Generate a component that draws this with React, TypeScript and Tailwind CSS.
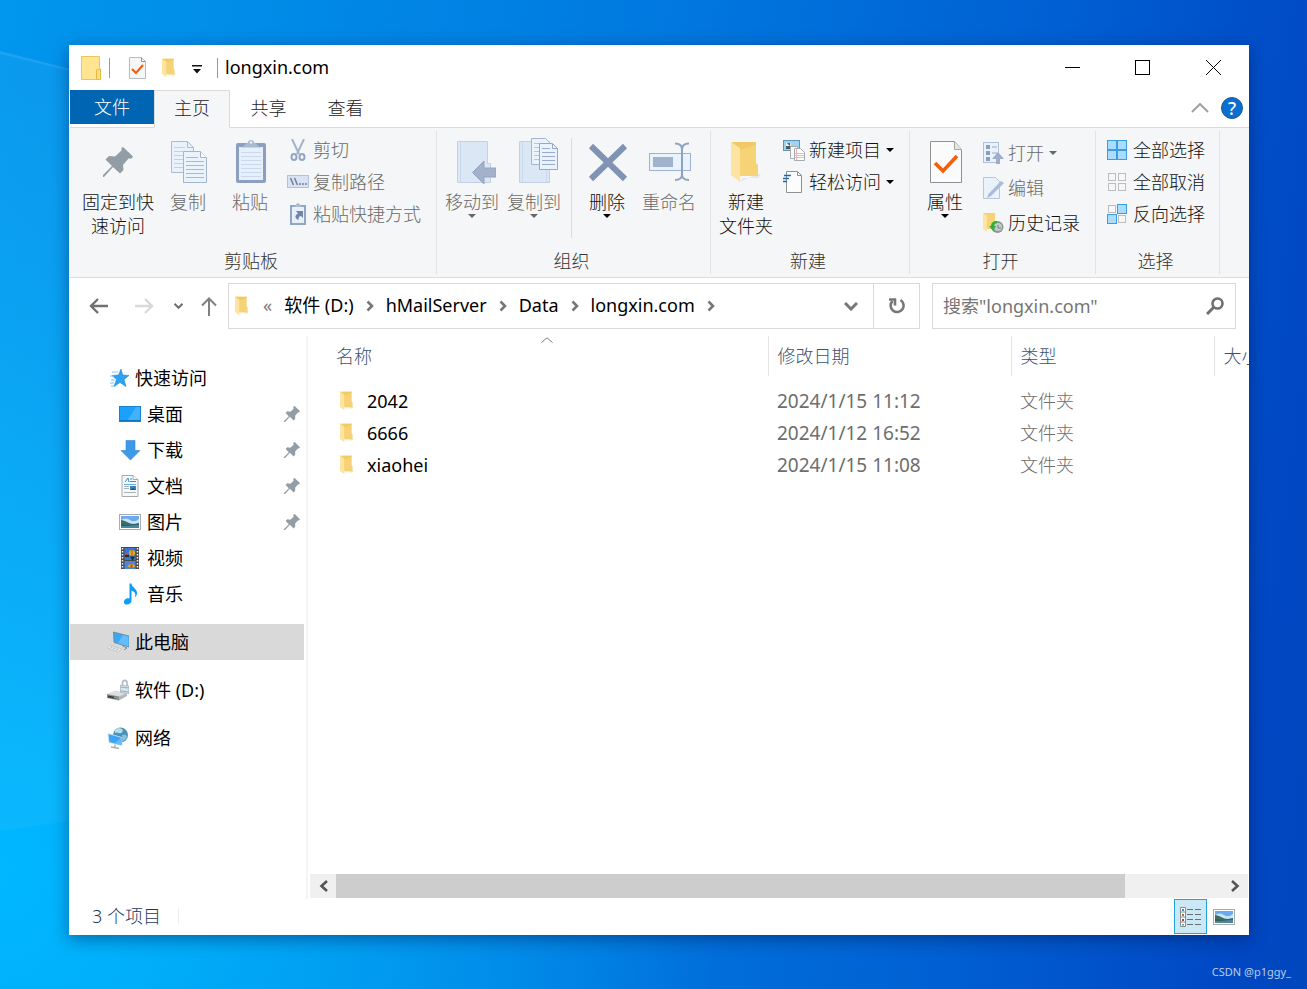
import { useState } from 'react'
import type { ReactNode } from 'react'

type IconName =
  | 'star'
  | 'desktop'
  | 'download'
  | 'document'
  | 'picture'
  | 'video'
  | 'music'
  | 'computer'
  | 'drive'
  | 'network'

type SideItem = {
  label: string
  icon: IconName
  pinned?: boolean
}

type FileItem = {
  name: string
  date: string
  type: string
}

const quickAccess: SideItem[] = [
  { label: '桌面', icon: 'desktop', pinned: true },
  { label: '下载', icon: 'download', pinned: true },
  { label: '文档', icon: 'document', pinned: true },
  { label: '图片', icon: 'picture', pinned: true },
  { label: '视频', icon: 'video' },
  { label: '音乐', icon: 'music' },
]

const roots: SideItem[] = [
  { label: '此电脑', icon: 'computer' },
  { label: '软件 (D:)', icon: 'drive' },
  { label: '网络', icon: 'network' },
]

const files: FileItem[] = [
  { name: '2042', date: '2024/1/15 11:12', type: '文件夹' },
  { name: '6666', date: '2024/1/12 16:52', type: '文件夹' },
  { name: 'xiaohei', date: '2024/1/15 11:08', type: '文件夹' },
]

const crumbs = ['软件 (D:)', 'hMailServer', 'Data', 'longxin.com']

/* ---------- shared icons ---------- */

const OpenFolder = ({ className }: { className: string }) => (
  <svg viewBox="0 0 30 42" className={className} aria-hidden="true">
    <path d="M27 33h3l-3 4H12l-4 4z" fill="#d9dbdd" opacity=".6" />
    <path d="M1 1h24v21l2 2v11H9z" fill="#f6d376" />
    <path d="M1 1h24v3L9 9z" fill="#f1ca66" />
    <path d="M0 1l9 6v34l-9-7z" fill="#ffe3a0" />
  </svg>
)

const SmallPin = () => (
  <svg viewBox="0 0 30 30" className="size-4" fill="#929da5" aria-hidden="true">
    <path d="M20 0l10 10-2 2-2 0-5 6 0 6-3 3-7-7-9 10-2 0 0-2 9-9-6-6 3-3 6 1 6-6-1-3z" />
  </svg>
)

const Caret = ({ muted }: { muted?: boolean }) => (
  <svg viewBox="0 0 8 4" className="h-1 w-2 shrink-0" fill={muted ? '#666' : '#000'} aria-hidden="true">
    <path d="M0 0h8L4 4z" />
  </svg>
)

const Chevron = () => (
  <svg viewBox="0 0 8 12" className="h-3 w-2 shrink-0" fill="none" stroke="#777" strokeWidth="2.6" aria-hidden="true">
    <path d="M1.500 1.500L6 6l-4.500 4.500" />
  </svg>
)

const Landscape = () => (
  <svg viewBox="0 0 22 16" className="h-4 w-[22px]" aria-hidden="true">
    <rect x=".5" y=".5" width="21" height="15" fill="#fff" stroke="#a8acb0" />
    <rect x="2" y="2" width="18" height="12" fill="#6ba9f0" />
    <path d="M2 6q5-3 9 0t9-1v5H2z" fill="#c9e4fa" />
    <path d="M2 6c4 0 8 4 13 4H2z" fill="#3f6f5b" />
    <path d="M2 10h18v4H2z" fill="#4a86a0" />
    <path d="M2 10c6 0 11 1 18-1v1.500L8 12H2z" fill="#2f5f58" />
  </svg>
)

const sideIcons: Record<IconName, ReactNode> = {
  star: (
    <svg viewBox="0 0 22 22" className="size-[22px]" aria-hidden="true">
      <path d="M14 2l1.600 6 6.400.5-5 4 2 7-6-4-6 4 2.500-7L5 8.500l6.500-.5z" fill="#2ea3f2" stroke="#1c86d6" strokeWidth=".6" />
      <path d="M5 5h6M3 9h4M4 13h4M3 16h4M4 19h3" stroke="#7fc6f5" />
    </svg>
  ),
  desktop: (
    <svg viewBox="0 0 22 16" className="h-4 w-[22px]" aria-hidden="true">
      <rect x=".5" y=".5" width="21" height="15" fill="#1ba1fb" stroke="#1784d6" />
      <path d="M8 15L17 1h4v14z" fill="#43b2fd" />
      <path d="M1 14.500h20" stroke="#1273bd" />
    </svg>
  ),
  download: (
    <svg viewBox="0 0 22 22" className="size-[22px]" aria-hidden="true">
      <path d="M7 1.500h9v10h5L11.500 21 2 11.500h5z" fill="#3d9ae8" stroke="#2f86d3" strokeWidth=".6" />
    </svg>
  ),
  document: (
    <svg viewBox="0 0 22 22" className="size-[22px]" aria-hidden="true">
      <path d="M3 .5h11l5 4v17H3z" fill="#f7f8f9" stroke="#a5aab0" />
      <path d="M14 .5v4h5" fill="#fff" stroke="#a5aab0" />
      <path d="M6 7l3-4 1 4M11 4h2M11 6.500h6" stroke="#2695dd" fill="none" />
      <path d="M5 9.500h12" stroke="#61b1e6" />
      <path d="M5 11.500h5M5 13.500h5M5 17.500h12" stroke="#a9b0b7" />
      <rect x="11" y="11" width="6" height="4" fill="#3c83bb" />
      <path d="M11 15l3-2 3 2z" fill="#2c5a48" />
    </svg>
  ),
  picture: <Landscape />,
  video: (
    <svg viewBox="0 0 22 22" className="size-[22px]" aria-hidden="true">
      <rect x="2" width="18" height="22" fill="#4a4a4a" />
      <rect x="5.500" y="1" width="11" height="12" fill="#3e74d0" />
      <rect x="5.500" y="14" width="11" height="8" fill="#4f83dc" />
      <path d="M3.500 1v21M18.500 1v21" stroke="#f2f2f2" strokeWidth="1.500" strokeDasharray="1.500 1.500" />
      <circle cx="13" cy="6" r="3" fill="#e3b21a" />
      <path d="M12.500 3h1v6h-1z" fill="#d43d2a" />
      <path d="M6 8h4v2H6zM11 9.500h5L13.500 14z" fill="#25301d" />
      <path d="M6 7.500h3" stroke="#d9472f" />
      <path d="M9 20c0-4 7-4 7 0z" fill="#e3b21a" />
      <path d="M11.500 17.500h2V20h-2z" fill="#d43d2a" />
    </svg>
  ),
  music: (
    <svg viewBox="0 0 22 22" className="size-[22px]" aria-hidden="true">
      <path d="M10.500.5h2c0 4 6 5 5.500 10-.2 2-1.500 3.500-2 3.500 1-4-.5-5.500-3.500-6.500v10c0 3-3 4.500-5.500 4S4.500 18 6 16.500s3-1.500 4.500-1z" fill="#0d9cf7" />
    </svg>
  ),
  computer: (
    <svg viewBox="0 0 22 22" className="size-[22px]" aria-hidden="true">
      <path d="M6.500 1l15.500 4v11L7 11.500z" fill="#3ba8f4" stroke="#6b8698" strokeWidth=".8" />
      <path d="M16 4l5.500 1.500v10L11 12z" fill="#62bdfa" />
      <path d="M15 14.500l5 2.500-3 2" fill="none" stroke="#84898d" />
      <path d="M3 14l12 4-4 3-11-4z" fill="#e9ecee" stroke="#b4b8bb" strokeWidth=".6" />
      <path d="M3 16l9 3M5 15l-2 3M8 16l-2 3M11 17l-2 3" stroke="#a9adb0" strokeWidth=".5" />
    </svg>
  ),
  drive: (
    <svg viewBox="0 0 22 22" className="size-[22px]" aria-hidden="true">
      <path d="M0 15l8-3.500 12 2.500-8 4.500z" fill="#dcdee0" />
      <path d="M12 17.500l8-3.500v3l-8 4.500z" fill="#b5b8ba" />
      <path d="M0 15l12 2.500v4L0 19z" fill="#8d9193" />
      <path d="M1 16.500l8 1.500v2l-8-1.500z" fill="#3b4042" />
      <rect x="7" y="18" width="2" height="1.500" fill="#38d25a" />
      <path d="M15.500 7V4c0-3.500 4.500-3.500 4.500 0v4" fill="none" stroke="#b5b9bc" strokeWidth="1.600" />
      <path d="M13.500 6l8.500 1v7.500l-8.500-1z" fill="#d9e4ea" stroke="#9aa8b1" strokeWidth=".6" />
      <path d="M13.500 8l8.500 1M13.500 12l8.500 1" stroke="#62a9cf" strokeWidth=".8" />
    </svg>
  ),
  network: (
    <svg viewBox="0 0 22 22" className="size-[22px]" aria-hidden="true">
      <circle cx="13.500" cy="8" r="7.500" fill="#4a93b8" />
      <path d="M8 3q4-4 8 0-1 4-4 3T8 6z" fill="#b7dcea" />
      <path d="M15 8q4-1 5 1 0 3-4 5z" fill="#8cc1d8" />
      <path d="M1 6.500l14 4v8L2 15.500z" fill="#38a5f5" stroke="#d5e4ee" strokeWidth=".8" />
      <path d="M14 11v7l-7-1.500z" fill="#62bdfb" />
      <path d="M8 17.500v2.500M4 20l8 1.500" stroke="#a8aeb2" strokeWidth="1.400" />
    </svg>
  ),
}

/* ---------- ribbon icons, big ones on a 48 grid ---------- */

const Big = ({ children }: { children: ReactNode }) => (
  <svg viewBox="0 0 48 48" className="mb-1 size-12" fill="none" aria-hidden="true">
    {children}
  </svg>
)

const Small = ({ children }: { children: ReactNode }) => (
  <svg viewBox="0 0 22 22" className="size-[22px] shrink-0" fill="none" aria-hidden="true">
    {children}
  </svg>
)

const bigPin = (
  <Big>
    <path d="M29 9l10 9.500-1.500 2h-3L29 27l.5 5-3.500 3.500-7-6.500L10 39H9v-2l9-9-6.500-6.500 3.500-3.500 6 .5 6.500-6V10z" fill="#929da5" />
  </Big>
)

const bigCopy = (
  <Big>
    <path d="M7.500 3.500h16l6 6v25h-22z" fill="#e9f1fb" stroke="#a9bbd6" />
    <path d="M23.500 3.500v6h6" stroke="#a9bbd6" />
    <path d="M10 9.500h11M10 13.500h11M10 17.500h11M10 21.500h9M10 25.500h9M10 29.500h9" stroke="#c2cfe3" />
    <path d="M19.500 13.500h17l6 6v25h-23z" fill="#eaf2fc" stroke="#a3b5d1" />
    <path d="M36.500 13.500v6h6" fill="#fff" stroke="#a3b5d1" />
    <path d="M22 19.500h12M22 23.500h18M22 27.500h18M22 31.500h18M22 35.500h18M22 39.500h18" stroke="#a9b9d3" />
  </Big>
)

const bigPaste = (
  <Big>
    <rect x="10" y="5" width="30" height="40" rx="2" fill="#8c9fc1" />
    <path d="M13 9h24v33H13z" fill="#e6effa" />
    <path d="M15 14.500h20M15 18.500h20M15 22.500h20M15 26.500h20M15 30.500h20M15 34.500h20M15 38.500h20" stroke="#cbd9ec" />
    <path d="M14 9.500c5 0 4-4 7.500-4.500 1-4 6-4 7 0 3.500.5 2.500 4.500 7.500 4.500z" fill="#a9bccf" />
    <circle cx="25" cy="4.500" r="1.200" fill="#eef3f8" />
  </Big>
)

const bigMove = (
  <Big>
    <path d="M9.500 3.500h30v22h3v19h-33z" fill="#dce7f5" stroke="#c3d1e6" />
    <path d="M12.500 4v40" stroke="#cbd9ec" />
    <path d="M24.500 34.500L36 23v7h12v9H36v7z" fill="#a3b1cb" stroke="#93a4c2" />
  </Big>
)

const bigCopyTo = (
  <Big>
    <path d="M9.500 3.500h30v41h-30z" fill="#dce7f5" stroke="#c3d1e6" />
    <path d="M12.500 4v40M36.500 30v14" stroke="#cbd9ec" />
    <path d="M21.500.5h14l5 5v21h-19z" fill="#eaf2fc" stroke="#a3b5d1" />
    <path d="M24 5.500h10M24 9.500h6M24 13.500h6M24 17.500h6M24 21.500h6" stroke="#b7c5db" />
    <path d="M29.500 5.500h13l5 5v21h-18z" fill="#eaf2fc" stroke="#94a8ca" />
    <path d="M42.500 5.500v5h5" stroke="#94a8ca" />
    <path d="M32 10.500h8M32 14.500h13M32 18.500h13M32 22.500h13M32 26.500h13" stroke="#9aadcc" />
  </Big>
)

const bigDelete = (
  <Big>
    <path d="M8 8l34 33M42 8L8 41" stroke="#8093b5" strokeWidth="6" />
  </Big>
)

const bigRename = (
  <Big>
    <rect x="4.500" y="15.500" width="41" height="17" fill="#e9f3fd" stroke="#9fb2d2" />
    <rect x="8" y="19" width="20" height="10" fill="#a1b1ce" />
    <path d="M30 5.500c5 0 7 2 7 6v25c0 3-2 5.500-7 5.500M44 5.500c-5 0-7 2-7 6v25c0 3 2 5.500 7 5.500" stroke="#8fa2c3" strokeWidth="2" />
  </Big>
)

const bigProps = (
  <Big>
    <path d="M9.500 3.500h24l7 8v33h-31z" fill="#fbfbfc" stroke="#8f9295" />
    <path d="M33.500 3.500v8h7" fill="#e3e5e7" stroke="#a2a5a8" />
    <path d="M14 25l8 8 14-15" stroke="#f2600c" strokeWidth="3.600" />
  </Big>
)

const cutIcon = (
  <Small>
    <path d="M5 0l7 15M17 0l-7 15" stroke="#a3b3cc" strokeWidth="2" />
    <ellipse cx="7" cy="18" rx="2.500" ry="3" stroke="#93a5c4" strokeWidth="2" />
    <ellipse cx="15" cy="18" rx="2.500" ry="3" stroke="#93a5c4" strokeWidth="2" />
  </Small>
)

const pathIcon = (
  <Small>
    <rect x=".5" y="4.500" width="21" height="12" fill="#d8e2f0" stroke="#b3c2da" />
    <path d="M3.500 7l3 7M7.500 7l3 7" stroke="#6d81a6" strokeWidth="1.500" />
    <path d="M12 13h2M15 13h2M18 13h2" stroke="#6d81a6" strokeWidth="1.500" />
  </Small>
)

const shortcutIcon = (
  <Small>
    <rect x="4" y="3" width="14" height="18" fill="#e6effa" stroke="#92a5c5" strokeWidth="2" />
    <path d="M6 4c3 0 3-4 5-4s2 4 5 4z" fill="#a9bccf" />
    <path d="M9 8h7v7l-2-2c-2 0-2.500 2-2.500 4C7 15 8 12 11 10.500z" fill="#6f84ab" />
  </Small>
)

const newItemIcon = (
  <Small>
    <rect x=".5" y="1.500" width="16" height="10" fill="#9fd3f2" stroke="#5b94b5" />
    <path d="M3 4h5v5H3z" fill="#e9eef0" />
    <path d="M4 4h3v3H3v3h5V7H7z" fill="#4d5c54" />
    <path d="M7.500 7.500h7v12h-7z" fill="#fbfbfb" stroke="#a9acaf" />
    <path d="M11.500 9.500h6l4 4v8h-10z" fill="#fff" stroke="#a9acaf" />
    <path d="M12 14.500h9M12 16.500h9M12 18.500h9" stroke="#a9cdf0" />
    <path d="M13.500 10v11" stroke="#edb5b5" />
  </Small>
)

const accessIcon = (
  <Small>
    <path d="M3.500.5h11l4 4v17h-15z" fill="#fcfcfc" stroke="#8f9295" />
    <path d="M14.500.5v4h4" stroke="#8f9295" />
    <path d="M1 4.500h7M0 7.500h6M0 10.500h4" stroke="#2367a8" strokeWidth="1.500" />
  </Small>
)

const openIcon = (
  <Small>
    <rect x="1.500" y=".5" width="15" height="20" fill="#e9f1fb" stroke="#b1c0da" />
    <path d="M4 3h4v4H4zM4 9h4v4H4zM4 15h4v4H4z" fill="#8b9dbf" />
    <path d="M10 5h5M10 11h5" stroke="#b1c0da" strokeWidth="1.500" />
    <path d="M16 10l6 7h-4v5h-4v-5h-4z" fill="#9dadca" />
  </Small>
)

const editIcon = (
  <Small>
    <path d="M1.500.5h12l4 4v17h-16z" fill="#e9f1fb" stroke="#b7c6dd" />
    <path d="M19 4l3 2L9 19l-4 2 1.500-4z" fill="#a9bbd6" />
  </Small>
)

const historyIcon = (
  <Small>
    <path d="M1 1h12v16H5z" fill="#f6d376" />
    <path d="M1 1l4 3v16l-4-3z" fill="#ffe3a0" />
    <circle cx="15.500" cy="15" r="6" fill="#8d9896" />
    <circle cx="16" cy="15" r="4" fill="#c3cbc9" />
    <path d="M16 13v3h3" stroke="#7a8381" />
    <path d="M15 9c-4 0-6 2-6 5H7l4 5 3-5h-2c0-2 1-3 3-3z" fill="#2fb23c" />
  </Small>
)

const TileIcon = ({ on }: { on: boolean[] }) => (
  <Small>
    {on.map((active, i) => (
      <rect
        key={i}
        x={(i % 2) * 10 + (active ? 0.5 : 1.5)}
        y={Math.floor(i / 2) * 10 + (active ? 1.5 : 2.5)}
        width={active ? 9 : 7}
        height={active ? 9 : 7}
        fill={active ? '#a9dcfd' : '#f7f7f7'}
        stroke={active ? '#3d9be0' : '#bdbdbd'}
      />
    ))}
  </Small>
)

/* ---------- ribbon ---------- */

type ActionProps = {
  icon: ReactNode
  label: string
  muted?: boolean
  menu?: boolean
  tall?: boolean
}

const BigAction = ({ icon, label, muted, menu }: ActionProps) => (
  <button
    type="button"
    className={`flex min-w-[62px] flex-col items-center pt-[7px] leading-6 whitespace-pre-line ${
      muted ? 'text-[#6a6a6a]' : 'text-[#111]'
    }`}
  >
    {icon}
    {label}
    {menu && <Caret muted={muted} />}
  </button>
)

const SmallAction = ({ icon, label, muted, menu, tall }: ActionProps) => (
  <button
    type="button"
    className={`flex items-center gap-1 whitespace-nowrap ${tall ? 'h-[35px]' : 'h-8'} ${
      muted ? 'text-[#6a6a6a]' : 'text-[#111]'
    }`}
  >
    {icon}
    <span className="mr-px">{label}</span>
    {menu && <Caret muted={muted} />}
  </button>
)

const Group = ({ title, className, children }: { title: string; className: string; children: ReactNode }) => (
  <section
    aria-label={title}
    className={`flex shrink-0 flex-col border-r border-[#e2e3e4] ${className}`}
  >
    <div className="flex h-[118px] items-start">{children}</div>
    <h2 className="pr-1 text-center leading-6 text-[#333]">{title}</h2>
  </section>
)

const Ribbon = () => (
  <div className="flex h-[150px] overflow-hidden border-b border-[#dadbdc] bg-[#f5f6f7] py-[3px]">
    <Group title="剪贴板" className="w-[367px]">
      <div className="flex w-24 justify-center">
        <BigAction icon={bigPin} label={'固定到快\n速访问'} />
      </div>
      <div className="-ml-[9px] flex">
        <BigAction icon={bigCopy} label="复制" muted />
        <BigAction icon={bigPaste} label="粘贴" muted />
      </div>
      <div className="ml-[6px] pt-[3px]">
        <SmallAction icon={cutIcon} label="剪切" muted />
        <SmallAction icon={pathIcon} label="复制路径" muted />
        <SmallAction icon={shortcutIcon} label="粘贴快捷方式" muted />
      </div>
    </Group>
    <Group title="组织" className="w-[274px]">
      <div className="flex pl-1">
        <BigAction icon={bigMove} label="移动到" muted menu />
        <BigAction icon={bigCopyTo} label="复制到" muted menu />
        <div className="mt-[7px] mr-1 ml-[6px] h-[100px] w-px bg-[#d9dadb]" />
        <BigAction icon={bigDelete} label="删除" menu />
        <BigAction icon={bigRename} label="重命名" muted />
      </div>
    </Group>
    <Group title="新建" className="w-[199px]">
      <div className="pl-1">
        <BigAction
          icon={
            <span className="mb-1 flex h-12 items-center">
              <OpenFolder className="h-[42px] w-[30px]" />
            </span>
          }
          label={'新建\n文件夹'}
        />
      </div>
      <div className="ml-[6px] pt-[3px]">
        <SmallAction icon={newItemIcon} label="新建项目" menu />
        <SmallAction icon={accessIcon} label="轻松访问" menu />
      </div>
    </Group>
    <Group title="打开" className="w-[186px]">
      <div className="pl-1">
        <BigAction icon={bigProps} label="属性" menu />
      </div>
      <div className="ml-[6px] pt-1">
        <SmallAction icon={openIcon} label="打开" muted menu tall />
        <SmallAction icon={editIcon} label="编辑" muted tall />
        <SmallAction icon={historyIcon} label="历史记录" tall />
      </div>
    </Group>
    <Group title="选择" className="w-[124px]">
      <div className="ml-[11px] pt-[3px]">
        <SmallAction icon={<TileIcon on={[true, true, true, true]} />} label="全部选择" />
        <SmallAction icon={<TileIcon on={[false, false, false, false]} />} label="全部取消" />
        <SmallAction icon={<TileIcon on={[false, true, true, false]} />} label="反向选择" />
      </div>
    </Group>
  </div>
)

/* ---------- window parts ---------- */

const TitleBar = () => (
  <header className="flex h-[45px] items-center pl-[11px]">
    <svg viewBox="0 0 20 24" className="h-6 w-5" aria-hidden="true">
      <path d="M.5.5h18v23H.5z" fill="#ffe592" stroke="#ecc65b" />
      <path d="M15.500 14l4-1v10.500h-4z" fill="#ffdf7d" stroke="#e3b944" />
    </svg>
    <div className="ml-2 h-5 w-px bg-[#999]" />
    <button type="button" aria-label="属性" className="ml-[19px]">
      <svg viewBox="0 0 17 22" className="h-[22px] w-[17px]" fill="none" aria-hidden="true">
        <path d="M.5.5h12l4 4v17H.5z" fill="#f5f6f7" stroke="#b9bcbf" />
        <path d="M12.500.5v4h4" stroke="#8f9295" />
        <path d="M3 12l4 4 7-8" stroke="#f2600c" strokeWidth="2.200" />
      </svg>
    </button>
    <button type="button" aria-label="新建文件夹" className="ml-4">
      <OpenFolder className="h-5 w-[14px]" />
    </button>
    <button type="button" aria-label="自定义快速访问工具栏" className="mt-1 ml-4">
      <svg viewBox="0 0 10 9" className="h-[9px] w-[10px]" aria-hidden="true">
        <path d="M0 0h10v1.500H0zM1 4h8L5 8.500z" fill="#111" />
      </svg>
    </button>
    <div className="ml-[15px] h-5 w-px bg-[#999]" />
    <h1 className="ml-[7px] flex-1 pb-[2px] font-normal text-black">longxin.com</h1>
    <button type="button" aria-label="最小化" className="flex h-full w-[69px] items-center justify-center">
      <span className="h-px w-[15px] bg-black" />
    </button>
    <button type="button" aria-label="最大化" className="flex h-full w-[70px] items-center justify-center">
      <span className="size-[15px] border border-black" />
    </button>
    <button type="button" aria-label="关闭" className="flex h-full w-[72px] items-center justify-center">
      <svg viewBox="0 0 15 15" className="size-[15px]" stroke="#000" aria-hidden="true">
        <path d="M0 0l15 15M15 0L0 15" />
      </svg>
    </button>
  </header>
)

const Tabs = () => (
  <div className="flex h-[38px] text-[#222]">
    <div className="border-b border-[#dadbdc]">
      <button type="button" className="h-[34px] w-[84px] bg-[#0065b3] text-white">
        文件
      </button>
    </div>
    <button
      type="button"
      className="w-[76px] border border-[#dadbdc] border-b-[#f5f6f7] bg-[#f5f6f7] pb-[2px]"
    >
      主页
    </button>
    <button type="button" className="w-[77px] border-b border-[#dadbdc] pb-px">
      共享
    </button>
    <button type="button" className="w-[77px] border-b border-[#dadbdc] pb-px">
      查看
    </button>
    <div className="flex flex-1 items-center justify-end gap-3 border-b border-[#dadbdc] pr-[6px] pb-[2px]">
      <button type="button" aria-label="最小化功能区">
        <svg viewBox="0 0 18 10" className="h-[10px] w-[18px]" fill="none" stroke="#a0a0a0" strokeWidth="2" aria-hidden="true">
          <path d="M1 9l8-8 8 8" />
        </svg>
      </button>
      <button
        type="button"
        aria-label="帮助"
        className="size-[22px] rounded-full border border-[#1d568c] bg-[#0a6fd0] leading-5 font-medium text-white"
      >
        ?
      </button>
    </div>
  </div>
)

const NavBar = () => (
  <div className="flex h-[57px] items-start pt-[5px] pr-[13px]">
    <div className="flex h-[46px] w-[158px] shrink-0 items-center pl-[19px]">
      <button type="button" aria-label="返回">
        <svg viewBox="0 0 19 16" className="h-4 w-[19px]" fill="none" stroke="#707070" strokeWidth="2.400" aria-hidden="true">
          <path d="M19 8H2M9 1L2 8l7 7" />
        </svg>
      </button>
      <button type="button" aria-label="前进" disabled className="ml-[27px]">
        <svg viewBox="0 0 19 16" className="h-4 w-[19px]" fill="none" stroke="#d9d9d9" strokeWidth="2.400" aria-hidden="true">
          <path d="M0 8h17M10 1l7 7-7 7" />
        </svg>
      </button>
      <button type="button" aria-label="最近浏览的位置" className="ml-5">
        <svg viewBox="0 0 9 6" className="h-[6px] w-[9px]" fill="none" stroke="#707070" strokeWidth="2" aria-hidden="true">
          <path d="M.5.8l4 4 4-4" />
        </svg>
      </button>
      <button type="button" aria-label="上移" className="ml-[18px]">
        <svg viewBox="0 0 16 19" className="h-[19px] w-4" fill="none" stroke="#808080" strokeWidth="2" aria-hidden="true">
          <path d="M8 19V2M1 8.500l7-7 7 7" />
        </svg>
      </button>
    </div>
    <div className="flex h-[46px] min-w-0 flex-1 items-center border border-[#d9d9d9] pl-[6px] font-normal text-black">
      <OpenFolder className="h-5 w-[14px] shrink-0" />
      <span className="ml-[14px] pb-[2px] text-[#777]">«</span>
      <nav aria-label="地址" className="ml-3 flex flex-1 items-center overflow-hidden whitespace-nowrap">
        {crumbs.map((crumb) => (
          <span key={crumb} className="flex items-center gap-3 pr-3">
            <a href="#" className="pb-[2px]">
              {crumb}
            </a>
            <Chevron />
          </span>
        ))}
      </nav>
      <button type="button" aria-label="以前的位置" className="flex h-full w-[45px] items-center justify-center">
        <svg viewBox="0 0 14 9" className="h-[9px] w-[14px]" fill="none" stroke="#777" strokeWidth="3" aria-hidden="true">
          <path d="M1 1l6 6 6-6" />
        </svg>
      </button>
      <button
        type="button"
        aria-label="刷新"
        className="flex h-full w-[46px] items-center justify-center border-l border-[#d9d9d9]"
      >
        <svg viewBox="0 0 18 18" className="size-[18px]" fill="none" stroke="#777" strokeWidth="2.600" aria-hidden="true">
          <path d="M12.500 3a6.500 6.500 0 1 1-8 1" />
          <path d="M1 2.500h6v6" />
        </svg>
      </button>
    </div>
    <label className="ml-3 flex h-[46px] w-[304px] items-center border border-[#d9d9d9] pr-[11px] pl-[10px]">
      <input
        type="text"
        aria-label="搜索"
        placeholder={'搜索"longxin.com"'}
        className="min-w-0 flex-1 font-normal outline-none placeholder:text-[#767676]"
      />
      <svg viewBox="0 0 18 18" className="size-[18px]" fill="none" stroke="#707070" aria-hidden="true">
        <circle cx="11.500" cy="6.500" r="5" strokeWidth="2.600" />
        <path d="M8 10l-7 7" strokeWidth="3" />
      </svg>
    </label>
  </div>
)

const Sidebar = () => {
  const [selected, setSelected] = useState('此电脑')

  return (
    <nav
      aria-label="导航窗格"
      className="w-[238px] shrink-0 border-r-2 border-[#f5f5f5] pt-6 pr-[2px] font-normal text-black"
    >
      <button type="button" className="flex h-9 w-full items-center gap-[6px] pl-[37px]">
        {sideIcons.star}
        快速访问
      </button>
      <ul>
        {quickAccess.map((item) => (
          <li key={item.label}>
            <button type="button" className="flex h-9 w-full items-center gap-[6px] pr-1 pl-[49px]">
              <span className="flex w-[22px] justify-center">{sideIcons[item.icon]}</span>
              <span className="flex-1 text-left">{item.label}</span>
              {item.pinned && <SmallPin />}
            </button>
          </li>
        ))}
      </ul>
      <ul className="mt-3 flex flex-col gap-3">
        {roots.map((item) => (
          <li key={item.label}>
            <button
              type="button"
              onClick={() => setSelected(item.label)}
              className={`flex h-9 w-full items-center gap-[6px] pl-[37px] ${
                selected === item.label ? 'bg-[#d9d9d9]' : ''
              }`}
            >
              {sideIcons[item.icon]}
              {item.label}
            </button>
          </li>
        ))}
      </ul>
    </nav>
  )
}

const FileTable = () => (
  <table className="w-[1026px] table-fixed text-left whitespace-nowrap">
    <colgroup>
      <col className="w-[460px]" />
      <col className="w-[243px]" />
      <col className="w-[203px]" />
      <col className="w-[120px]" />
    </colgroup>
    <thead className="text-[#3d5270]">
      <tr className="h-10">
        <th className="relative border-r border-[#e5e5e5] pl-7 font-light">
          名称
          <svg viewBox="0 0 12 6" className="absolute top-px left-[233px] h-[6px] w-3" fill="none" stroke="#777" aria-hidden="true">
            <path d="M.5 5.500L6 .8l5.500 4.700" />
          </svg>
        </th>
        <th className="border-r border-[#e5e5e5] pl-[9px] font-light">修改日期</th>
        <th className="border-r border-[#e5e5e5] pl-[9px] font-light">类型</th>
        <th className="pl-[9px] font-light">大小</th>
      </tr>
    </thead>
    <tbody className="text-[#6d6d6d] before:block before:h-[9px]">
      {files.map((file) => (
        <tr key={file.name} className="h-8">
          <td className="pl-8 font-normal text-black">
            <span className="flex items-center gap-[13px]">
              <OpenFolder className="h-5 w-[14px]" />
              {file.name}
            </span>
          </td>
          <td className="pl-[9px] text-[19px] font-normal">{file.date}</td>
          <td className="pl-[9px]">{file.type}</td>
          <td />
        </tr>
      ))}
    </tbody>
  </table>
)

const ScrollBar = () => (
  <div className="mr-px mb-px ml-[2px] flex h-6 bg-[#f0f0f0]">
    <button type="button" aria-label="向左滚动" className="flex w-[26px] items-center justify-center">
      <svg viewBox="0 0 9 12" className="h-3 w-[9px]" fill="none" stroke="#555" strokeWidth="2.600" aria-hidden="true">
        <path d="M8 1L2.500 6 8 11" />
      </svg>
    </button>
    <div className="flex-1">
      <div className="h-full w-[89%] bg-[#cdcdcd]" />
    </div>
    <button type="button" aria-label="向右滚动" className="flex w-[26px] items-center justify-center">
      <svg viewBox="0 0 9 12" className="h-3 w-[9px]" fill="none" stroke="#555" strokeWidth="2.600" aria-hidden="true">
        <path d="M1 1l5.500 5L1 11" />
      </svg>
    </button>
  </div>
)

const StatusBar = () => (
  <footer className="flex h-9 items-start pl-[22px] text-[#1e395b]">
    <span className="pt-[5px]">3 个项目</span>
    <span className="mt-[9px] ml-[17px] h-4 w-px bg-[#eee]" />
    <div className="flex flex-1 items-center justify-end gap-[6px] pr-[14px]">
      <button
        type="button"
        aria-label="详细信息"
        className="flex h-[35px] w-[33px] items-center justify-center border border-[#26a0da] bg-[#cbe8f6]"
      >
        <svg viewBox="0 0 21 20" className="h-5 w-[21px]" fill="none" aria-hidden="true">
          <path d="M.5.5h5v19h-5zM.5 5h5M.5 10h5M.5 15h5" fill="#fff" stroke="#8c8c8c" />
          <path d="M2 2h2v2H2z" fill="#3f86c8" />
          <path d="M2 7h2v2H2z" fill="#7c8a2c" />
          <path d="M2 12h2v2H2z" fill="#bf3a2c" />
          <path d="M2 17h2v1.500H2z" fill="#4f9aa8" />
          <path d="M7 2.500h6M15 2.500h6M7 7.500h6M15 7.500h6M7 12.500h6M15 12.500h6M7 17.500h6M15 17.500h6" stroke="#6d6d6d" />
        </svg>
      </button>
      <button type="button" aria-label="大图标">
        <Landscape />
      </button>
    </div>
  </footer>
)

export default function App() {
  return (
    <main className="relative flex min-h-screen flex-col bg-[radial-gradient(ellipse_55%_80%_at_0%_88%,#00b8ff_0%,#00b8ff00_100%),linear-gradient(97deg,#0097ee_0%,#0090ea_12%,#007ae0_45%,#005fd2_75%,#0048c4_94%,#0046bd_100%)] pt-[45px] pr-[58px] pb-[54px] pl-[69px] font-['Noto_Sans','Noto_Sans_CJK_SC',sans-serif] text-lg leading-6 font-light">
      {/* light rays on the wallpaper */}
      <svg
        viewBox="0 0 70 989"
        preserveAspectRatio="none"
        className="absolute inset-y-0 left-0 h-full w-[70px]"
        fill="#fff"
        aria-hidden="true"
      >
        <path d="M0 51l70 18v2L0 54z" opacity=".12" />
        <path d="M0 54l70 17v750L0 831z" opacity=".04" />
      </svg>
      <div className="relative flex min-h-0 flex-1 flex-col bg-white pl-px shadow-[0_4px_16px_rgba(0,20,70,0.45)]">
        <TitleBar />
        <Tabs />
        <Ribbon />
        <NavBar />
        <div className="flex flex-1 pt-px">
          <Sidebar />
          <div className="flex min-w-0 flex-1 flex-col justify-between overflow-hidden">
            <FileTable />
            <ScrollBar />
          </div>
        </div>
        <StatusBar />
      </div>
      <p className="absolute right-4 bottom-2 text-[11px] leading-[18px] font-normal text-[#b9cdec]">CSDN @p1ggy_</p>
    </main>
  )
}
